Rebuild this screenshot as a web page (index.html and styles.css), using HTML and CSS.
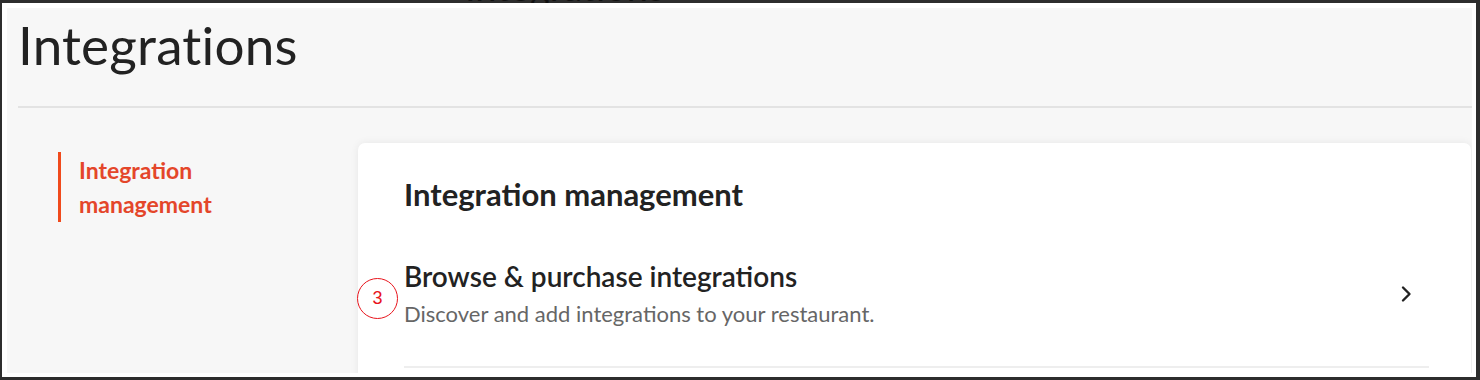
FILE: index.html
```html
<!DOCTYPE html>
<html lang="en">
<head>
<meta charset="utf-8">
<title>Integrations</title>
<link rel="stylesheet" href="styles.css">
</head>
<body>
<div class="topband"><span class="ghost">Integrations</span></div>
<div class="screen">
  <div class="page">
    <header class="page-header">
      <h1 class="page-title">Integrations</h1>
    </header>
    <div class="content">
      <nav class="sidenav">
        <a class="sidenav-item active">Integration<br>management</a>
      </nav>
      <main class="card">
        <h2 class="card-title">Integration management</h2>
        <div class="row">
          <div class="row-text">
            <div class="row-title">Browse &amp; purchase integrations</div>
            <div class="row-desc">Discover and add integrations to your restaurant.</div>
          </div>
          <svg class="chevron" viewBox="0 0 24 24" width="24" height="24" aria-hidden="true">
            <path d="M9 5.5l6.5 6.5-6.5 6.5" fill="none" stroke="#222" stroke-width="2.4" stroke-linecap="round" stroke-linejoin="round"/>
          </svg>
          <span class="callout">3</span>
        </div>
      </main>
    </div>
  </div>
</div>
</body>
</html>
```
FILE: styles.css
```css
* { box-sizing: border-box; }
html, body { margin: 0; padding: 0; }
body {
  width: 1480px;
  height: 380px;
  background: #2d2d2d;
  overflow: hidden;
  font-family: "Lato", "Liberation Sans", sans-serif;
}
.topband {
  height: 3px;
  overflow: hidden;
  padding-left: 465px;
}
.ghost {
  display: block;
  margin-top: -30px;
  font-size: 38px;
  line-height: 32px;
  color: #111;
}
.screen {
  margin: 0 4px 0 2px;
  height: 374px;
  background: #ffffff;
  padding: 5px 4px 4px 5px;
}
.page {
  height: 365px;
  background: #f7f7f7;
  overflow: hidden;
  padding-left: 11px;
}
.page-header {
  border-bottom: 2px solid #e3e3e3;
  height: 100px;
}
.page-title {
  margin: 0;
  padding-top: 9px;
  font-family: "Lato", sans-serif;
  font-weight: 400;
  font-size: 53px;
  line-height: 56px;
  color: #222;
  letter-spacing: 0.2px;
}
.content {
  display: flex;
  padding-top: 35px;
}
.sidenav {
  width: 340px;
  flex: none;
  padding-left: 40px;
  padding-top: 9px;
}
.sidenav-item {
  display: block;
  border-left: 3px solid #f04a1c;
  padding-left: 18px;
  font-weight: 700;
  font-size: 23px;
  line-height: 34px;
  color: #e4462a;
  height: 70px;
  padding-top: 1px;
}
.card {
  flex: 1;
  margin-right: 1px;
  background: #fff;
  border-radius: 7px;
  box-shadow: 0 0 8px rgba(0,0,0,0.07);
  padding: 31px 42px 0 46px;
  height: 300px;
}
.card-title {
  margin: 0;
  font-weight: 700;
  font-size: 31px;
  line-height: 40px;
  color: #222;
}
.row {
  position: relative;
  display: flex;
  align-items: center;
  margin-top: 46px;
  padding-bottom: 39px;
  border-bottom: 2px solid #eeeeee;
}
.row-text { flex: 1; }
.row-title {
  font-weight: 600;
  font-size: 28px;
  line-height: 32px;
  color: #222;
}
.row-desc {
  margin-top: 9px;
  font-size: 22px;
  line-height: 26px;
  color: #666;
}
.chevron { flex: none; margin-right: 11px; align-self: flex-start; margin-top: 22px; }
.callout {
  position: absolute;
  left: -47px;
  top: 18px;
  width: 41px;
  height: 41px;
  border: 1.6px solid #e8141c;
  border-radius: 50%;
  display: flex;
  align-items: center;
  justify-content: center;
  font-family: "Liberation Sans", Arial, sans-serif;
  font-size: 18px;
  color: #e8141c;
  background: #fff;
}
```
